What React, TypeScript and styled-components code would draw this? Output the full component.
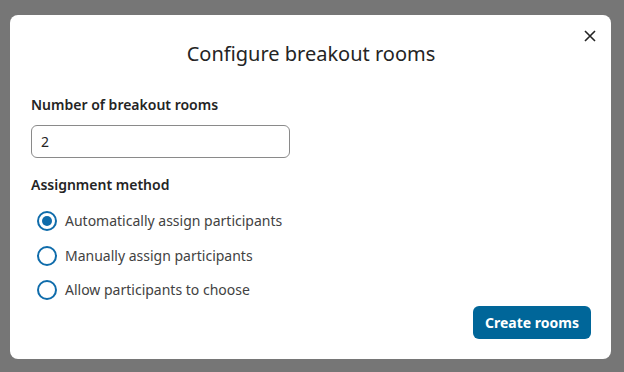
import React, { useState } from "react";
import styled, { createGlobalStyle } from "styled-components";

const Global = createGlobalStyle`
  html, body { margin: 0; padding: 0; background: #767676; }
  body { font-family: "Noto Sans", "Open Sans", sans-serif; color: #242424; }
  * { box-sizing: border-box; }
`;

const Backdrop = styled.div`
  width: 624px;
  height: 372px;
  padding: 15px 13px 13px 10px;
  background: #767676;
`;

const Dialog = styled.div`
  position: relative;
  width: 601px;
  height: 344px;
  background: #ffffff;
  border-radius: 8px;
  padding: 26px 20px 20px 21px;
  display: flex;
  flex-direction: column;
`;

const Title = styled.h2`
  margin: 0;
  text-align: center;
  font-size: 20px;
  font-weight: 400;
  line-height: 26px;
  color: #242424;
`;

const Close = styled.button`
  position: absolute;
  top: 11px;
  right: 11px;
  width: 20px;
  height: 20px;
  border: none;
  background: none;
  padding: 0;
  display: flex;
  align-items: center;
  justify-content: center;
  cursor: pointer;
`;

const Label = styled.div<{ $mt: number }>`
  font-size: 14px;
  font-weight: 600;
  line-height: 20px;
  color: #242424;
  margin-top: ${(p) => p.$mt}px;
`;

const Input = styled.input`
  margin-top: 10px;
  width: 259px;
  height: 33px;
  border: 1px solid #8a8a8a;
  border-radius: 6px;
  padding: 0 9px;
  font-family: inherit;
  font-size: 14px;
  color: #242424;
  outline: none;
`;

const RadioList = styled.div`
  margin-top: 16px;
  display: flex;
  flex-direction: column;
  gap: 14px;
  padding-left: 6px;
`;

const RadioRow = styled.label`
  display: flex;
  align-items: center;
  gap: 8px;
  font-size: 14px;
  line-height: 20.5px;
  color: #424242;
  cursor: pointer;
`;

const Circle = styled.span<{ $on: boolean }>`
  width: 20px;
  height: 20px;
  border-radius: 50%;
  border: 2px solid #0f6cab;
  display: flex;
  align-items: center;
  justify-content: center;
  &::after {
    content: "";
    width: 10px;
    height: 10px;
    border-radius: 50%;
    background: #0f6cab;
    display: ${(p) => (p.$on ? "block" : "none")};
  }
`;

const Footer = styled.div`
  margin-top: auto;
  display: flex;
  justify-content: flex-end;
`;

const Primary = styled.button`
  height: 33px;
  padding: 0 12px;
  border: none;
  border-radius: 6px;
  background: #006699;
  color: #ffffff;
  font-family: inherit;
  font-size: 14px;
  font-weight: 700;
  cursor: pointer;
`;

const options = [
  "Automatically assign participants",
  "Manually assign participants",
  "Allow participants to choose",
];

export default function App() {
  const [sel, setSel] = useState(0);
  return (
    <>
      <Global />
      <Backdrop>
        <Dialog>
          <Close aria-label="Close">
            <svg width="12" height="12" viewBox="0 0 12 12">
              <path d="M1 1 L11 11 M11 1 L1 11" stroke="#242424" strokeWidth="1.6" />
            </svg>
          </Close>
          <Title>Configure breakout rooms</Title>
          <Label $mt={28}>Number of breakout rooms</Label>
          <Input defaultValue="2" />
          <Label $mt={17}>Assignment method</Label>
          <RadioList>
            {options.map((o, i) => (
              <RadioRow key={o} onClick={() => setSel(i)}>
                <Circle $on={sel === i} />
                {o}
              </RadioRow>
            ))}
          </RadioList>
          <Footer>
            <Primary>Create rooms</Primary>
          </Footer>
        </Dialog>
      </Backdrop>
    </>
  );
}
